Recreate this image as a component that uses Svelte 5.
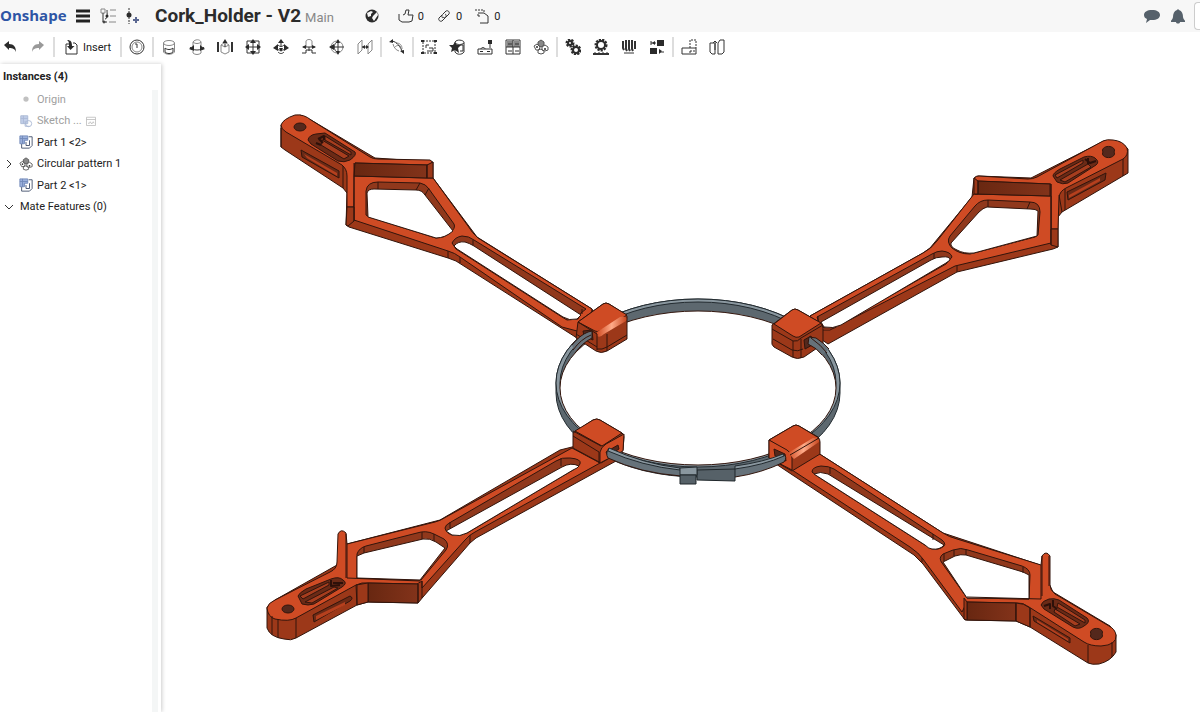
<script>
  const tools = [
    'mate', '|', 'fastened', 'revolute', 'slider', 'planar', 'ball', 'pinslot', 'cylindrical', 'parallel', '|',
    'tangent', '|', 'group', 'replicate', 'pattern', 'grid', 'circular', '|',
    'gears', 'rack', 'screw', 'linear', '|', 'measure', 'mirror'
  ];
  const labels = {
    mate: 'Mate', fastened: 'Fastened mate', revolute: 'Revolute mate', slider: 'Slider mate', planar: 'Planar mate',
    ball: 'Ball mate', pinslot: 'Pin slot mate', cylindrical: 'Cylindrical mate', parallel: 'Parallel mate',
    tangent: 'Tangent mate', group: 'Group', replicate: 'Replicate', pattern: 'Mate connector', grid: 'Linear pattern',
    circular: 'Circular pattern', gears: 'Gear relation', rack: 'Rack and pinion', screw: 'Screw relation',
    linear: 'Linear relation', measure: 'Insert layout', mirror: 'Named positions'
  };
  const rows = [
    { name: 'Origin', icon: 'origin', dim: true },
    { name: 'Sketch ...', icon: 'sketch', dim: true, extra: true },
    { name: 'Part 1 <2>', icon: 'part' },
    { name: 'Circular pattern 1', icon: 'circular', expand: true },
    { name: 'Part 2 <1>', icon: 'part' }
  ];
  const counts = [['like', 'Likes'], ['link', 'Links'], ['copy', 'Copies']];

  // Each entry is a face class and its outline, painted back to front.
  const northWest = [
    ['side', 'M281 125L281 147L285 150L343 188L347 193L346 225L349 227L448 258L456 261L577 338L600 330L592 309L477 237L433 178L433 162L375 158L311 120L300 115Z'],
    ['top', 'M281 125Q283 119 295 115Q304 114 311 120L370 157Q373 159 378 159L430 160Q433 161 432 164L427 165L355 163L354 207L347 207L347 176Q347 169 342 165L286 132Q281 129 281 125Z'],
    ['top', 'M354 176L428 178L433 178L468 226Q472 233 478 238L592 309L590 330L577 331L562 327L460 257Q455 253 448 251L354 220Z'],
    ['dark', 'M355 163L427 165L427 178L354 176Z'],
    ['side', 'M427 165L433 162L433 178L427 178Z'],
    ['side', 'M347 207L354 207L354 221L348 226L346 225Z'],
    ['wall', 'M366 215L366 191Q367 182 378 182L420 183Q426 184 429 189L454 224Q456 228 450 233Q444 238 436 238L369 217Z'],
    ['void', 'M368 217L367 193Q368 189 374 189L416 190Q422 190 425 195L453 231Q445 238 436 238Z'],
    ['line', 'M378 182V189M420 183L416 190M429 188L425 195M354 163V221M427 165V178M281 128V147M448 251V258M460 257V263M343 166V188'],
    ['wall', 'M452 243Q455 237 462 236Q469 236 474 240L586 309L581 313L578 319L567 320L562 317L456 249Z'],
    ['void', 'M454 246Q458 241 465 242Q469 243 474 246L581 315L577 319Q569 321 563 317L457 249Z'],
    ['line', 'M473 240V245M582 309V314'],
    ['pocket', 'M308 140Q309 135 316 134L325 133L355 152Q357 155 350 160Q344 163 338 161L311 144Z'],
    ['ledge', 'M322 140L349 156L344 159L321 145ZM325 136L351 152V155L325 140Z'],
    ['groove', 'M318 139L324 136V140M316 143L321 145M319 139L323 143'],
    ['pocket', 'M301 150L339 171L339 178L302 157Z'],
    ['slot', 'M304 154L337 173V176L307 158Z'],
    ['hole', 'M294 127A6 4 0 1 0 306 127A6 4 0 1 0 294 127Z']
  ];
  const northEast = [
    ['side', 'M1128 149L1128 173L1062 212L1058 217L1058 247L1053 249L957 272L828 344L815 335L810 316L923 253L930 248L972 197L974 178L978 176L1031 178L1104 141L1120 142Z'],
    ['top', 'M1127 148Q1123 141 1113 140Q1107 139 1103 141L1037 177Q1033 179 1028 179L979 176Q973 176 975 181L1051 184L1051 229L1058 229L1059 197Q1060 191 1066 188L1123 159Q1129 155 1127 148Z'],
    ['top', 'M1051 196L974 194L937 241Q931 249 923 253L810 316L812 330L830 330L955 266L1051 243Z'],
    ['dark', 'M978 181L1050 184L1050 196L975 194Z'],
    ['side', 'M974 178L978 181L978 194L974 194Z'],
    ['side', 'M1051 229L1058 229L1058 247L1051 245Z'],
    ['wall', 'M1038 235L1040 212Q1040 202 1030 202L988 200Q980 200 975 206L950 236Q946 242 952 248Q959 254 970 254L1035 237Z'],
    ['void', 'M1037 236L1038 211Q1036 209 1030 209L987 207Q983 208 979 212L951 243Q950 247 957 250Q964 254 974 253Z'],
    ['line', 'M988 200V207M1030 202L1027 209M978 181V194M1051 184V245M957 266V272M1059 195L1062 212M1065 189V210M1123 159V176'],
    ['wall', 'M952 257Q951 252 942 251Q937 251 932 254L817 317L820 325L824 328L834 328L946 264Z'],
    ['void', 'M950 260Q950 256 942 257Q936 257 931 260L821 322L824 327Q833 329 841 325L946 263Z'],
    ['line', 'M818 316V323M934 253V259'],
    ['pocket', 'M1053 176Q1053 173 1060 169L1084 157Q1091 155 1095 158Q1100 162 1096 165L1068 183Q1063 185 1057 182Z'],
    ['ledge', 'M1055 175L1083 160V163L1057 178ZM1060 180L1088 164L1091 167L1065 182Z'],
    ['groove', 'M1085 159L1090 163L1096 161M1088 158V164'],
    ['pocket', 'M1067 192L1106 173L1105 180L1068 200Z'],
    ['slot', 'M1069 195L1100 178V181L1069 198Z'],
    ['hole', 'M1103 152A6 4 0 1 0 1114 152A6 4 0 1 0 1103 152Z']
  ];
  const southWest = [
    ['side', 'M267 607L267 628Q270 637 284 639Q291 641 296 638L357 605L368 602L418 603L423 597L470 543L476 538L616 461L600 440L560 450L440 520L347 544L337 565L275 600Z'],
    ['top', 'M267 608Q268 603 275 600L330 572Q337 569 337 562L338 534Q341 528 346 533L347 544L435 522Q440 521 446 517L572 448L600 463L475 532Q469 535 465 540L422 588L422 581L417 584L368 583Q362 582 356 585L296 618Q289 622 275 619Q268 617 267 608Z'],
    ['dark', 'M368 583L418 584L418 603L368 602Z'],
    ['side', 'M356 585L368 583V602L357 605Z'],
    ['wall', 'M357 578L357 554Q359 548 366 546L417 533Q426 530 434 534L444 539Q450 544 446 550L421 580Z'],
    ['void', 'M357 578L357 556L364 553L423 539Q430 538 436 542L445 548L420 580Z'],
    ['line', 'M347 544V578L420 581M364 547V553M422 532V539M434 534V541M418 584V603M422 581V598M346 534V578M278 619V638M272 616V635M296 618V638M470 535V543M357 585V605'],
    ['wall', 'M445 528Q445 525 451 522L556 461Q562 457 570 458Q582 459 580 464Q579 467 573 470L467 533Q460 537 452 535Q446 533 445 528Z'],
    ['void', 'M446 531L562 467Q571 462 579 466Q578 468 573 470L467 533Q460 537 452 535Z'],
    ['line', 'M450 522V528M561 458V466'],
    ['pocket', 'M298 596Q299 593 306 589L331 579Q339 576 343 580Q348 583 342 587L314 604Q308 606 302 604Z'],
    ['ledge', 'M300 596L329 582V585L303 599ZM305 602L334 587L338 588L312 603Z'],
    ['groove', 'M331 580V586L340 585M333 583L343 583'],
    ['pocket', 'M313 615L350 596Q354 598 350 601L314 622Z'],
    ['slot', 'M316 616L345 602V605L316 620Z'],
    ['hole', 'M282 609A6 4 0 1 0 294 609A6 4 0 1 0 282 609Z']
  ];
  const southEast = [
    ['side', 'M1116 635L1116 652Q1111 661 1099 664Q1092 665 1088 663L1030 627L1016 621L965 620L923 564L914 555L791 474L770 460L818 453L943 533L1040 565L1053 592L1110 626Z'],
    ['top', 'M1116 635Q1115 629 1109 626L1055 594Q1050 590 1050 585L1050 556Q1046 550 1042 556L1041 565L957 539Q949 537 943 533L818 453L792 470L910 547Q919 553 923 559L962 612L967 602L1015 603Q1023 602 1029 607L1084 642Q1090 646 1101 646Q1117 645 1116 635Z'],
    ['dark', 'M967 602L1016 603L1016 621L967 620Z'],
    ['side', 'M1016 603Q1024 603 1030 608V627L1016 621Z'],
    ['side', 'M964 598L967 602V620L964 619Z'],
    ['wall', 'M1029 599L1030 575Q1030 569 1022 566L968 550Q961 547 953 550L943 554Q938 558 942 563L967 598Z'],
    ['void', 'M1029 599L1029 575L1023 572L966 555Q961 554 955 556L943 562L967 598Z'],
    ['line', 'M1041 565V599L967 597M954 550V556M966 549V555M1023 567V573M944 554V561M1042 556V596M1030 608V627M1088 645V663M1112 642V657M1016 603V621M922 558V562M1049 556V586'],
    ['wall', 'M812 472Q812 467 821 466Q829 466 834 469L942 540Q948 545 941 548Q934 551 928 547L817 476Z'],
    ['void', 'M814 474Q820 471 828 474L944 545Q940 550 932 549Q929 549 925 545L817 476Z'],
    ['line', 'M830 467V474M933 534V540'],
    ['pocket', 'M1041 605Q1042 601 1049 599Q1054 598 1059 600L1087 618Q1091 622 1084 626Q1079 630 1073 627L1044 609Z'],
    ['ledge', 'M1058 603L1085 620V623L1057 607ZM1055 609L1080 624L1075 626L1054 612Z'],
    ['groove', 'M1044 606L1050 604V609M1053 600V606L1057 609'],
    ['pocket', 'M1033 616L1070 638L1070 643L1034 621Z'],
    ['slot', 'M1037 620L1068 639V641L1037 622Z'],
    ['hole', 'M1091 634A6 4 0 1 0 1102 634A6 4 0 1 0 1091 634Z']
  ];
  const blocks = [
    ['side', 'M578 322L603 304Q606 302 609 304L625 314Q628 316 627 320L627 339L607 351Q601 354 596 351L576 338Z'],
    ['top', 'M578 322L603 304Q606 302 609 304L627 315L600 331Q597 332 595 331Z'],
    ['shine', 'M597 332L620 317Q628 315 626 321L604 334Q600 338 597 336Z'],
    ['line', 'M578 322L597 334V350M607 334V351M597 349Q602 350 607 347L627 335M576 334L597 347'],
    ['hole', 'M583 331L592 330L593 340L584 336Z'],
    ['side', 'M772 325L792 310Q795 308 798 310L819 322Q823 324 823 328V344L804 357Q797 360 792 357L774 347Q771 345 772 340Z'],
    ['top', 'M774 324L792 310Q795 308 798 310L821 323L799 337Q796 338 793 336Z'],
    ['line', 'M772 329L793 341Q798 342 801 338L823 325M793 341V357M801 339V358M773 339L792 350Q798 352 803 349'],
    ['hole', 'M804 340L811 336L814 344L805 349Z'],
    ['side', 'M573 433L593 420Q597 418 600 420L622 433Q624 434 624 437L623 450L601 463L573 448Z'],
    ['top', 'M575 431L593 420Q597 418 600 420L622 433L602 446Z'],
    ['top', 'M600 463L600 452Q601 447 606 444L624 434L623 451Z'],
    ['line', 'M573 436L599 452V463M573 431L601 446'],
    ['hole', 'M606 452L618 445L619 449L608 456Z'],
    ['side', 'M769 440L793 426Q796 424 799 426L818 437Q820 439 820 442V454L792 471L769 458Z'],
    ['top', 'M769 440L793 426Q796 424 799 426L819 438L792 455Z'],
    ['top', 'M769 440L787 450Q792 453 792 458V470L769 458Z'],
    ['shine', 'M788 453L813 438Q820 438 819 442L794 459Z'],
    ['line', 'M819 438L790 455'],
    ['hole', 'M774 449L785 454L786 461L775 456Z']
  ];
  const straps = [
    ['strap', 'M572 345Q580 335 588 332L592 331V338Q582 343 575 353Z'],
    ['line', 'M572 345Q580 335 588 332L592 331V338Q582 343 575 353M573 350Q581 339 591 335'],
    ['strap', 'M809 337L816 338Q824 343 829 349L822 355Q817 348 808 344Z'],
    ['line', 'M829 349Q824 343 816 338L809 337L808 344Q817 348 822 355M811 338Q821 345 827 353'],
    ['strap', 'M609 448Q644 464 681 469V476Q640 473 608 458Q605 453 609 448Z'],
    ['line', 'M681 476Q640 473 608 458Q605 453 609 448'],
    ['strap', 'M735 468Q764 464 783 454Q788 457 784 462Q762 473 735 477Z'],
    ['line', 'M783 454Q788 457 784 462Q762 473 735 477'],
    ['rim', 'M609 448Q644 464 680 468L680 470Q642 466 608 451Z'],
    ['rim', 'M735 466Q764 462 783 454L784 456Q764 465 735 469Z'],
    ['tab', 'M697 470L735 469V481L697 480Z'],
    ['rim', 'M680 468L697 467L697 475L680 475Z'],
    ['tab', 'M680 475H696V484H680Z']
  ];
  const arms = [...northWest, ...northEast, ...southWest, ...southEast, ...blocks, ...straps];
</script>

{#snippet icon(kind)}
  <svg class="icon" viewBox="0 0 16 16" aria-hidden="true">
    {#if kind === 'undo'}
      <path class="solid" d="M2 6l5-4v3c5 0 7 3 7 8-1-3-3-4-7-4v2z" />
    {:else if kind === 'redo'}
      <path class="grey" d="M14 6L9 2v3c-5 0-7 3-7 8 1-3 3-4 7-4v2z" />
    {:else if kind === 'insert'}
      <path d="M5 5H2v10h11V6l-2-2H9" /><path class="solid" d="M3 1c4 0 5 2 5 6h2.500l-4 4-3.500-4h2c0-3 0-5-2-6z" />
    {:else if kind === 'mate'}
      <circle cx="8" cy="8" r="7" /><circle class="thin" cx="8" cy="8" r="5" /><path d="M6 5h2v4" />
    {:else if kind === 'fastened'}
      <ellipse class="thin" cx="8" cy="4" rx="5.500" ry="2.500" /><path class="thin" d="M2.500 4v9c2 3 9 3 11 0V4" /><path d="M4 9c2 2 6 2 8 0v4c-2 2-6 2-8 0z" />
    {:else if kind === 'revolute'}
      <path class="thin" d="M4 7V3c2-3 7-3 8 0v4M4 3c2 2 6 2 8 0M4 12v2c2 2 6 2 8 0v-2" /><path d="M1 8c2 4 12 4 14 0" /><path class="solid" d="M0 10l5-4v6zM16 10l-5-4v6z" />
    {:else if kind === 'slider'}
      <path class="wide" d="M1 3v10M15 3v10" /><path class="thin" d="M4 6v7l4 2 4-2V6L8 8zM4 6l3-2M12 6l-3-2" /><path d="M8 8V2" /><path class="solid" d="M5.500 4L8 0l2.500 4z" />
    {:else if kind === 'planar'}
      <path d="M2 2h12v12H2zM8 2v12M2 8h12" /><path class="solid" d="M8 0l3 4H5zM8 16l3-4H5zM0 8l4-3v6zM16 8l-4-3v6z" />
    {:else if kind === 'ball'}
      <path class="solid" d="M8 0l3 4H5zM0 9l5-4v7zM16 9l-5-4v7z" /><path d="M3 9c2 3 8 3 10 0M5 13c2 2 4 2 6 0M8 3v5M5 6c2 2 4 2 6 0" /><path class="solid" d="M6 9h4l-2 4z" />
    {:else if kind === 'pinslot'}
      <path class="thin" d="M5 8V2c1-2 5-2 6 0v6" /><path d="M1 14h4v-3h6v3h4M2 8h12M8 8v4" /><path class="solid" d="M1 8l4-2v4zM15 8l-4-2v4z" />
    {:else if kind === 'cylindrical'}
      <circle class="thin" cx="8" cy="8" r="6" /><path d="M9 1v14M1 8h14M9 2c-5 3-5 9 0 12" /><path class="solid" d="M9 0l2 4H7zM9 16l2-4H7zM0 8l5-3v6z" />
    {:else if kind === 'parallel'}
      <path class="thin" d="M1 15V5l4-4v10zM11 15V5l4-4v10z" /><path d="M5 8h6" /><path class="solid" d="M5 8l3-2v4zM12 8L9 6v4z" />
    {:else if kind === 'tangent'}
      <path class="thin" d="M4 5c1 4 3 6 6 7M7 4c4 0 6 2 6 6M6 8c2-2 4-2 6 0" /><path d="M2 2c4 0 8 3 11 10" /><path class="solid" d="M0 3l4-3v4zM15 15l-4-3 4-1z" />
    {:else if kind === 'group'}
      <path class="dash" d="M2 2h12v12H2z" /><path d="M5 9V6h3M8 9h4v3H6" /><path class="solid" d="M0 1h3v2H0zM13 1h3v2h-3zM0 13h3v2H0zM13 13h3v2h-3z" />
    {:else if kind === 'replicate'}
      <path d="M6 3c2-3 8-2 9 0v10c-2 3-7 3-9 0zM6 4c2 2 7 2 9 0M11 6h3v6h-3" /><path class="solid" d="M6 3l2 3h4L9 9l1 5-4-3-4 2 1-4-3-3h4z" />
    {:else if kind === 'pattern'}
      <path d="M1 10h14v5H1zM4 10c0-2 4-2 4 0" /><path class="solid" d="M11 1h4v4h-4zM3 12h3v1H3zM10 12h3v1h-3z" /><path d="M13 5v4" />
    {:else if kind === 'grid'}
      <path class="mid" d="M2 2h6v6H2zM9 2h5v6H9z" /><path d="M1 1h14v14H1zM8 1v14M1 8h14M3 5h4M10 5h4M3 12h4M10 12h4" />
    {:else if kind === 'circular'}
      <path class="mid" d="M5 3l3-2 3 2v3L8 8 5 6z" /><path class="soft" d="M5 3l3-2 3 2v3L8 8 5 6zM1 7l3-2 3 3-1 3-3 0zM9 8l3-2 3 2v3l-3 1-3-1zM5 11l3-1 3 2v2l-3 1-3-1z" /><circle class="solid" cx="4" cy="8" r="1" /><circle class="solid" cx="12" cy="10" r="1" />
    {:else if kind === 'gears'}
      <circle class="cog" cx="5" cy="4" r="3" /><circle class="gear" cx="5" cy="4" r="2" /><circle class="cog" cx="11" cy="11" r="4" /><circle class="gear" cx="11" cy="11" r="3" />
    {:else if kind === 'rack'}
      <circle class="cog" cx="8" cy="6" r="5" /><circle class="gear" cx="8" cy="6" r="4" /><path class="wide" d="M0 15h16" /><path d="M2 13v2M6 13v2M10 13v2M14 13v2" />
    {:else if kind === 'screw'}
      <path class="wide" d="M2 2v7l1 2M5 1v9l1 2M8 1v9l1 2M11 1v9l1 2M14 2v8" /><path d="M3 14h10" />
    {:else if kind === 'linear'}
      <path class="solid" d="M8 1h7v6H8zM1 9h7v6H1z" /><path d="M2 4h5M10 13h5M2 2v4" /><path class="solid" d="M3 4l3-2v4zM13 12l-3-2v5z" />
    {:else if kind === 'measure'}
      <path d="M1 9h14v6H1z" /><path class="dash" d="M9 9V1h6v8" /><path d="M9 14v-2h2M13 11v2" />
    {:else if kind === 'mirror'}
      <path d="M5 4H1v9l2 2h3V4M6 2v9M9 4l2-3h4v12l-2 2H9zM4 4l2-2 2 2" />
    {:else if kind === 'tree'}
      <path class="thin" d="M1 1h4v4H1zM10 2h6M10 8h6M9 14h7" /><path d="M3 5v9h4M5 11c3 0 2-6 2-9" /><circle class="solid" cx="7" cy="8" r="1.500" /><circle cx="4" cy="14" r="1" />
    {:else if kind === 'branch'}
      <path class="dash" d="M4 0v16" /><circle class="solid" cx="4" cy="7" r="2.500" /><path class="blue" d="M8 12h6M11 9v6" />
    {:else if kind === 'menu'}
      <path class="bar" d="M1 3h14M1 8h14M1 13h14" />
    {:else if kind === 'globe'}
      <circle class="solid" cx="8" cy="8" r="6.500" /><path class="paper" d="M3 5l4-2 2 1-2 2 0 2-3 1zM9 8l4-4 1 3-2 3-2 3-2-3z" />
    {:else if kind === 'like'}
      <path d="M1 6v6l3 2h7l3-1 1-6h-5l1-5H8L7 6l-2 1" />
    {:else if kind === 'link'}
      <path d="M7 10c-2-1-1-3 0-4l3-3c2-1 4 1 3 3l-3 3c-1 1-2 1-3 0M9 6c2 1 1 3 0 4l-3 3c-2 1-4-1-3-3l3-3" />
    {:else if kind === 'copy'}
      <path d="M4 5h6l4 3v7H6M6 8H4V6" /><path class="dash" d="M1 2h9v3" />
    {:else if kind === 'chat'}
      <path class="slate" d="M8 2c5 0 8 2 8 5s-3 5-8 5l-2 0-4 3 1-4C1 10 0 9 0 7c0-3 3-5 8-5z" />
    {:else if kind === 'bell'}
      <path class="slate" d="M8 1l1 1c3 1 4 4 4 7 0 2 2 3 2 4v1H1v-1c0-1 2-2 2-4 0-3 1-6 4-7zM6 14h4c0 2-4 2-4 0z" />
    {:else if kind === 'origin'}
      <circle class="grey" cx="8" cy="8" r="3" />
    {:else if kind === 'sketch'}
      <path class="tint" d="M2 2h8v9H2z" /><path class="steel" d="M2 2h8v9H2zM2 5h8M5 2v9" /><circle class="steel" cx="11" cy="11" r="3.500" /><path class="steel" d="M7 8v6h5" />
    {:else if kind === 'part'}
      <path class="navy" d="M3 10v5h9l3-3V2h-4M8 8v4h4V6" /><path class="tint" d="M1 1h9v5H7v4H1z" /><path class="steel" d="M1 1h9v5H6v4H1zM1 4h9M4 1v9" />
    {:else if kind === 'window'}
      <path class="thin" d="M2 3h12v11H2zM2 6h12M4 11h2l1-2 2 3 2-3 1 2" />
    {/if}
  </svg>
{/snippet}

<div class="app">
  <header>
    <a class="logo" href="#home">Onshape</a>
    <div class="group">
      <button aria-label="Menu">{@render icon('menu')}</button>
      <button aria-label="Versions and history">{@render icon('tree')}</button>
      <button aria-label="Create version">{@render icon('branch')}</button>
    </div>
    <h1>Cork_Holder - V2</h1>
    <span class="workspace">Main</span>
    <button class="globe" aria-label="Public document">{@render icon('globe')}</button>
    <div class="counts">
      {#each counts as [kind, label]}
        <button aria-label={label}>{@render icon(kind)}<span>0</span></button>
      {/each}
    </div>
    <div class="right">
      <button aria-label="Comments">{@render icon('chat')}</button>
      <button aria-label="Notifications">{@render icon('bell')}</button>
      <button class="edge" aria-label="Share"></button>
    </div>
  </header>

  <nav class="toolbar" aria-label="Assembly tools">
    <button aria-label="Undo">{@render icon('undo')}</button>
    <button aria-label="Redo">{@render icon('redo')}</button>
    <i></i>
    <button class="insert">{@render icon('insert')}<span>Insert</span></button>
    <i></i>
    {#each tools as tool}
      {#if tool === '|'}<i></i>{:else}<button aria-label={labels[tool]}>{@render icon(tool)}</button>{/if}
    {/each}
  </nav>

  <main>
    <aside>
      <div class="list">
        <h2>Instances (4)</h2>
        <ul>
          {#each rows as row}
            <li class:dim={row.dim}>
              <span class="caret">
                {#if row.expand}<svg viewBox="0 0 8 8" aria-hidden="true"><path d="M2 0l4 4-4 4" /></svg>{/if}
              </span>
              {@render icon(row.icon)}
              <span>{row.name}</span>
              {#if row.extra}{@render icon('window')}{/if}
            </li>
          {/each}
          <li class="mates">
            <span class="caret"><svg viewBox="0 0 8 8" aria-hidden="true"><path d="M0 2l4 4 4-4" /></svg></span>
            <span>Mate Features (0)</span>
          </li>
        </ul>
      </div>
      <div class="track"></div>
    </aside>
    <section class="canvas" aria-label="Model view">
      <svg class="model" viewBox="162 64 1038 648">
        <defs>
          <linearGradient id="wallShade"><stop offset="0" stop-color="#682711" /><stop offset="1" stop-color="#83331a" /></linearGradient>
          <linearGradient id="gloss"><stop offset="0" stop-color="#d04c23" /><stop offset="0.500" stop-color="#ffab89" /><stop offset="1" stop-color="#c84820" /></linearGradient>
        </defs>
        <path class="band" d="M556 383A142 84 0 0 1 840 383V393A142 84 0 0 1 556 393Z" />
        <path class="rim" fill-rule="evenodd" d="M556 383A142 84 0 0 1 840 383A142 84 0 0 1 556 383ZM560 383A138 81 0 0 0 836 383A138 81 0 0 0 560 383Z" />
        <path class="void" d="M560 388A138 77 0 0 1 836 388A138 77 0 0 1 560 388Z" />
        {#each arms as [face, d]}
          <path class={face} {d} />
        {/each}
      </svg>
    </section>
  </main>
</div>

<style>
  :global(body) { margin: 0; background: #fff; }
  .app {
    display: flex; flex-direction: column; min-height: 100vh; overflow: hidden;
    font-family: Roboto, "Liberation Sans", sans-serif; font-size: 11px; color: #222;
  }
  button { border: 0; background: none; padding: 0; margin: 0; font: inherit; color: inherit; display: flex; align-items: center; justify-content: center; }
  .icon { width: 16px; height: 16px; flex: none; fill: none; stroke: #333; stroke-width: 1; }
  .solid { fill: #2b2b2b; stroke: none; }
  .grey { fill: #999; stroke: none; }
  .mid { fill: #888; stroke: none; }
  .thin { stroke: #888; }
  .soft { stroke: #555; }
  .wide { stroke-width: 2; }
  .bar { stroke: #222; stroke-width: 3; }
  .dash { stroke-dasharray: 2 1; }
  .cog { stroke: #2b2b2b; stroke-width: 3; stroke-dasharray: 2 1; }
  .gear { stroke: #2b2b2b; stroke-width: 2; }
  .paper { fill: #f7f7f7; stroke: none; }
  .slate { fill: #56616b; stroke: none; }
  .blue { stroke: #5a6791; stroke-width: 2; }
  .tint { fill: #9bb0dc; stroke: none; }
  .steel { stroke: #7088b8; }
  .navy { stroke: #3b4967; }

  header { display: flex; align-items: center; height: 32px; background: #f7f7f7; white-space: nowrap; }
  .logo { width: 75px; font: bold 15px/30px "Open Sans", sans-serif; color: #2e55a5; text-decoration: none; height: 32px; }
  .group { display: flex; gap: 9px; width: 80px; }
  h1 { margin: 0; font-size: 19px; line-height: 32px; font-weight: 700; color: #2b2b2b; }
  .workspace { margin-left: 4px; font-size: 13px; line-height: 32px; color: #888; padding-top: 4px; }
  .globe { margin-left: 30px; }
  .counts { display: flex; gap: 12px; margin-left: 18px; }
  .counts button { gap: 4px; }
  .right { display: flex; gap: 10px; margin-left: auto; align-items: center; }
  .edge { width: 6px; height: 28px; background: #fff; border: 1px solid #ccc; border-right: 0; border-radius: 4px 0 0 4px; margin-left: -2px; }

  .toolbar { display: flex; align-items: center; gap: 8px; height: 30px; background: #fff; }
  .toolbar button { width: 20px; height: 24px; flex: none; }
  .toolbar .insert { width: 55px; gap: 3px; font-size: 11px; }
  .toolbar i { width: 2px; height: 20px; background: #ddd; margin: 0 -3px; flex: none; }

  main { display: flex; flex: 1; }
  aside { display: flex; width: 161px; flex: none; margin-top: 2px; box-shadow: 1px 0 4px #ccc; background: #fff; }
  .list { flex: 1; min-width: 0; }
  .track { width: 6px; margin: 26px 3px 0 0; background: #f4f6f6; }
  h2 { margin: 0; padding: 4px 0 0 3px; font-size: 11px; line-height: 18px; font-weight: 700; }
  ul { list-style: none; margin: 2px 0 0; padding: 0; }
  li { display: flex; align-items: center; height: 22px; white-space: nowrap; }
  li:nth-child(even) { height: 21px; }
  li .icon { width: 14px; height: 14px; margin-right: 4px; }
  li .icon:last-child { width: 12px; height: 12px; margin-left: 3px; }
  .dim { color: #a0a0a0; }
  .dim .icon { opacity: 0.6; }
  .caret { width: 19px; flex: none; display: flex; }
  .caret svg { width: 8px; height: 8px; margin-left: 5px; fill: none; stroke: #333; }
  .mates .caret { width: 20px; }

  .canvas { flex: 1; min-width: 0; display: flex; align-items: flex-start; margin-top: 2px; padding-left: 1px; }
  .model { width: 100%; display: block; stroke: #32150c; stroke-width: 1; stroke-linejoin: round; }
  .side { fill: #9c3819; }
  .top { fill: #cf4b24; }
  .dark { fill: url(#wallShade); }
  .wall { fill: #90381c; }
  .pocket { fill: #6b2a16; }
  .void { fill: #fff; }
  .line { fill: none; }
  .groove { fill: none; stroke: #2d1009; stroke-width: 2; }
  .ledge { fill: #a63d1e; }
  .slot { fill: #b6401e; stroke-width: 0; }
  .hole { fill: #54281c; }
  .shine { fill: url(#gloss); stroke: none; }
  .band { fill: #5d686f; stroke: #222a2f; }
  .strap { fill: #66727a; stroke: none; }
  .rim { fill: #8a979f; stroke: #222a2f; }
  .tab { fill: #566168; stroke: #1f262a; }
</style>
